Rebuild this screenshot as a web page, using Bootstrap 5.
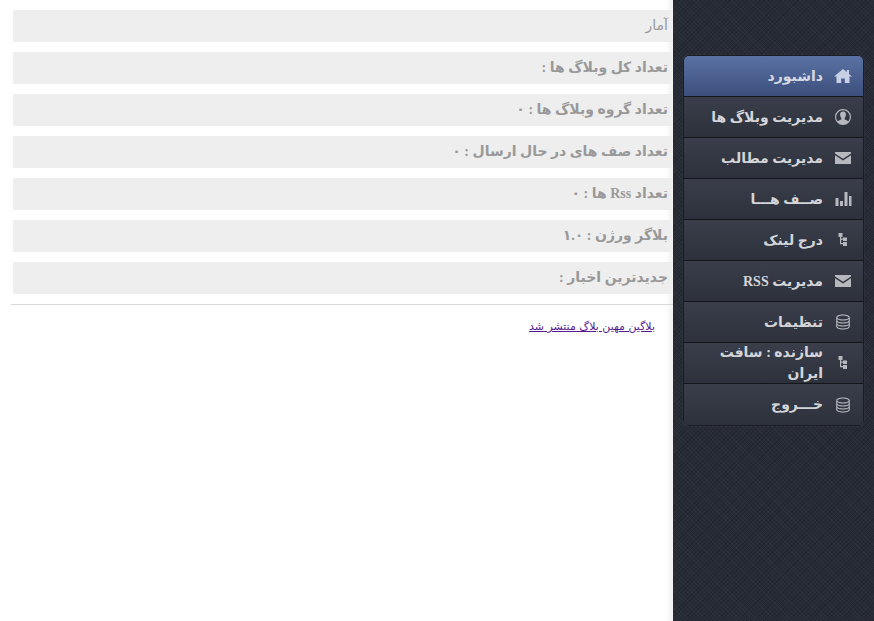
<!DOCTYPE html>
<html lang="fa" dir="rtl">
<head>
<meta charset="utf-8">
<title>داشبورد</title>
<link rel="stylesheet" href="https://cdn.jsdelivr.net/npm/bootstrap@5.3.0/dist/css/bootstrap.min.css">
<style>
html,body{height:100%;overflow:hidden}
body{background:#fff;font-family:"Liberation Serif","DejaVu Sans",sans-serif}
.shell{height:621px;width:874px}
.side-pane{width:201px;flex:none;padding:55px 10px 0 9px;background-color:#272b35;
 background-image:repeating-linear-gradient(45deg,rgba(255,255,255,.025) 0 1px,transparent 1px 3px),repeating-linear-gradient(-45deg,rgba(0,0,0,.12) 0 1px,transparent 1px 3px);box-shadow:0 0 0 0 #000}
.side-menu{width:181px;border:1px solid #1b1d24;border-radius:6px;overflow:hidden;background:#2f333e;box-shadow:0 0 1px rgba(255,255,255,.25)}
.side-link{height:41px;padding-right:11px;color:#d4d5d8;font-size:14px;font-weight:700;text-decoration:none;border-bottom:1px solid #14161b;
 background:linear-gradient(#3a3e4a,#2d313c);gap:11px}
.side-link:last-child{border-bottom:0}
.side-link.on{background:linear-gradient(#5a72a4,#3c4f7c);color:#d5d9e4}
.ico{width:18px;height:18px;flex:none;fill:#b6b8bd}
.on .ico{fill:#c7d0e4}
.main-pane{background:#fff;border-left:1px solid #d4d4d4;box-shadow:inset -9px 0 6px -6px #eee;padding:10px 0 0 1px;margin-left:0}
.stat-row{height:32px;width:659px;margin:0 1px 10px 11px;padding:0 4px;background:#eee;color:#999;font-size:14px;font-weight:700;line-height:31px}
.stat-row.plain{font-weight:400}
.rule-line{width:662px;height:1px;background:#d9d9d9;margin:0 0 0 10px}
.news-link{font-size:11px;color:#551a8b;margin:15px 18px 0 0;display:inline-block;font-family:"DejaVu Sans",sans-serif;font-weight:400;line-height:13px}
</style>
</head>
<body>
<div class="shell d-flex">
 <aside class="side-pane">
  <nav class="side-menu d-flex flex-column">
   <a class="side-link on d-flex align-items-center" href="#"><svg class="ico" viewBox="0 0 18 18"><path d="M9 2 0 9.5h2.5V16h4.7v-4.5h3.6V16h4.7V9.500H18l-3-2.600V3h-2.300v1.900z"/></svg>داشبورد</a>
   <a class="side-link d-flex align-items-center" href="#"><svg class="ico" viewBox="0 0 18 18"><path fill-rule="evenodd" d="M9 1a8 8 0 1 0 0 16A8 8 0 0 0 9 1zm0 1.200a6.800 6.800 0 0 1 5.300 11c-.8-.8-2.700-1.400-3.600-1.800v-1.500c.8-.7 1.200-1.800 1.200-3.400C11.900 4.800 10.800 3.500 9 3.500S6.100 4.800 6.100 6.500c0 1.600.4 2.700 1.200 3.400v1.500c-.9.4-2.800 1-3.600 1.800A6.800 6.800 0 0 1 9 2.200z"/></svg>مدیریت وبلاگ ها</a>
   <a class="side-link d-flex align-items-center" href="#"><svg class="ico" viewBox="0 0 18 18"><path d="M1 3h16v1.500L9 9.800 1 4.500zM1 6.300 9 11.500l8-5.200V15H1z"/></svg>مدیریت مطالب</a>
   <a class="side-link d-flex align-items-center" href="#"><svg class="ico" viewBox="0 0 18 18"><path d="M1.500 8h3v8h-3zM6 11h3v5H6zM10.500 2h3v14h-3zM15 6h2.500v10H15z"/></svg>صــف هـــا</a>
   <a class="side-link d-flex align-items-center" href="#"><svg class="ico" viewBox="0 0 18 18"><path d="M4.500 2h4v4H7.200v1.500h1.800V6.500h4v3.500H9V8.700H7.200v3.300H9v-1h4v4H9v-1.800H6V6H4.500z"/></svg>درج لینک</a>
   <a class="side-link d-flex align-items-center" href="#"><svg class="ico" viewBox="0 0 18 18"><path d="M1 3h16v1.500L9 9.800 1 4.500zM1 6.300 9 11.500l8-5.200V15H1z"/></svg>مدیریت RSS</a>
   <a class="side-link d-flex align-items-center" href="#"><svg class="ico" viewBox="0 0 18 18"><path fill-rule="evenodd" d="M9 1.500c-3.800 0-6.800 1.200-6.800 3v9c0 1.800 3 3 6.800 3s6.800-1.200 6.800-3v-9c0-1.800-3-3-6.800-3zm0 1c3.300 0 5.700 1 5.700 2s-2.400 2-5.700 2-5.700-1-5.700-2 2.400-2 5.700-2zM3.300 6.300C4.600 7.100 6.700 7.500 9 7.500s4.400-.4 5.700-1.200v1.200c0 1-2.400 2-5.700 2s-5.700-1-5.700-2zm0 3C4.600 10.100 6.700 10.500 9 10.500s4.400-.4 5.700-1.200v1.200c0 1-2.400 2-5.700 2s-5.700-1-5.700-2zm0 3c1.300.8 3.400 1.200 5.700 1.200s4.400-.4 5.700-1.200v1.200c0 1-2.400 2-5.700 2s-5.700-1-5.700-2z"/></svg>تنظیمات</a>
   <a class="side-link d-flex align-items-center" href="#"><svg class="ico" viewBox="0 0 18 18"><path d="M4.500 2h4v4H7.200v1.500h1.800V6.500h4v3.500H9V8.700H7.200v3.300H9v-1h4v4H9v-1.800H6V6H4.500z"/></svg>سازنده : سافت ایران</a>
   <a class="side-link d-flex align-items-center" href="#"><svg class="ico" viewBox="0 0 18 18"><path fill-rule="evenodd" d="M9 1.500c-3.800 0-6.800 1.200-6.800 3v9c0 1.800 3 3 6.800 3s6.800-1.200 6.800-3v-9c0-1.800-3-3-6.800-3zm0 1c3.300 0 5.700 1 5.700 2s-2.400 2-5.700 2-5.700-1-5.700-2 2.400-2 5.700-2zM3.300 6.300C4.600 7.100 6.700 7.500 9 7.500s4.400-.4 5.700-1.200v1.200c0 1-2.400 2-5.700 2s-5.700-1-5.700-2zm0 3C4.600 10.100 6.700 10.500 9 10.500s4.400-.4 5.700-1.200v1.200c0 1-2.400 2-5.700 2s-5.700-1-5.700-2zm0 3c1.300.8 3.400 1.200 5.700 1.200s4.400-.4 5.700-1.200v1.200c0 1-2.400 2-5.700 2s-5.700-1-5.700-2z"/></svg>خـــروج</a>
  </nav>
 </aside>
 <main class="main-pane flex-grow-1">
  <div class="stat-row plain">آمار</div>
  <div class="stat-row">تعداد کل وبلاگ ها :</div>
  <div class="stat-row">تعداد گروه وبلاگ ها : ۰</div>
  <div class="stat-row">تعداد صف های در حال ارسال : ۰</div>
  <div class="stat-row">تعداد Rss ها : ۰</div>
  <div class="stat-row">بلاگر ورژن : ۱.۰</div>
  <div class="stat-row">جدیدترین اخبار :</div>
  <div class="rule-line"></div>
  <a class="news-link" href="#">بلاگین مهین بلاگ منتشر شد</a>
 </main>
</div>
</body>
</html>
